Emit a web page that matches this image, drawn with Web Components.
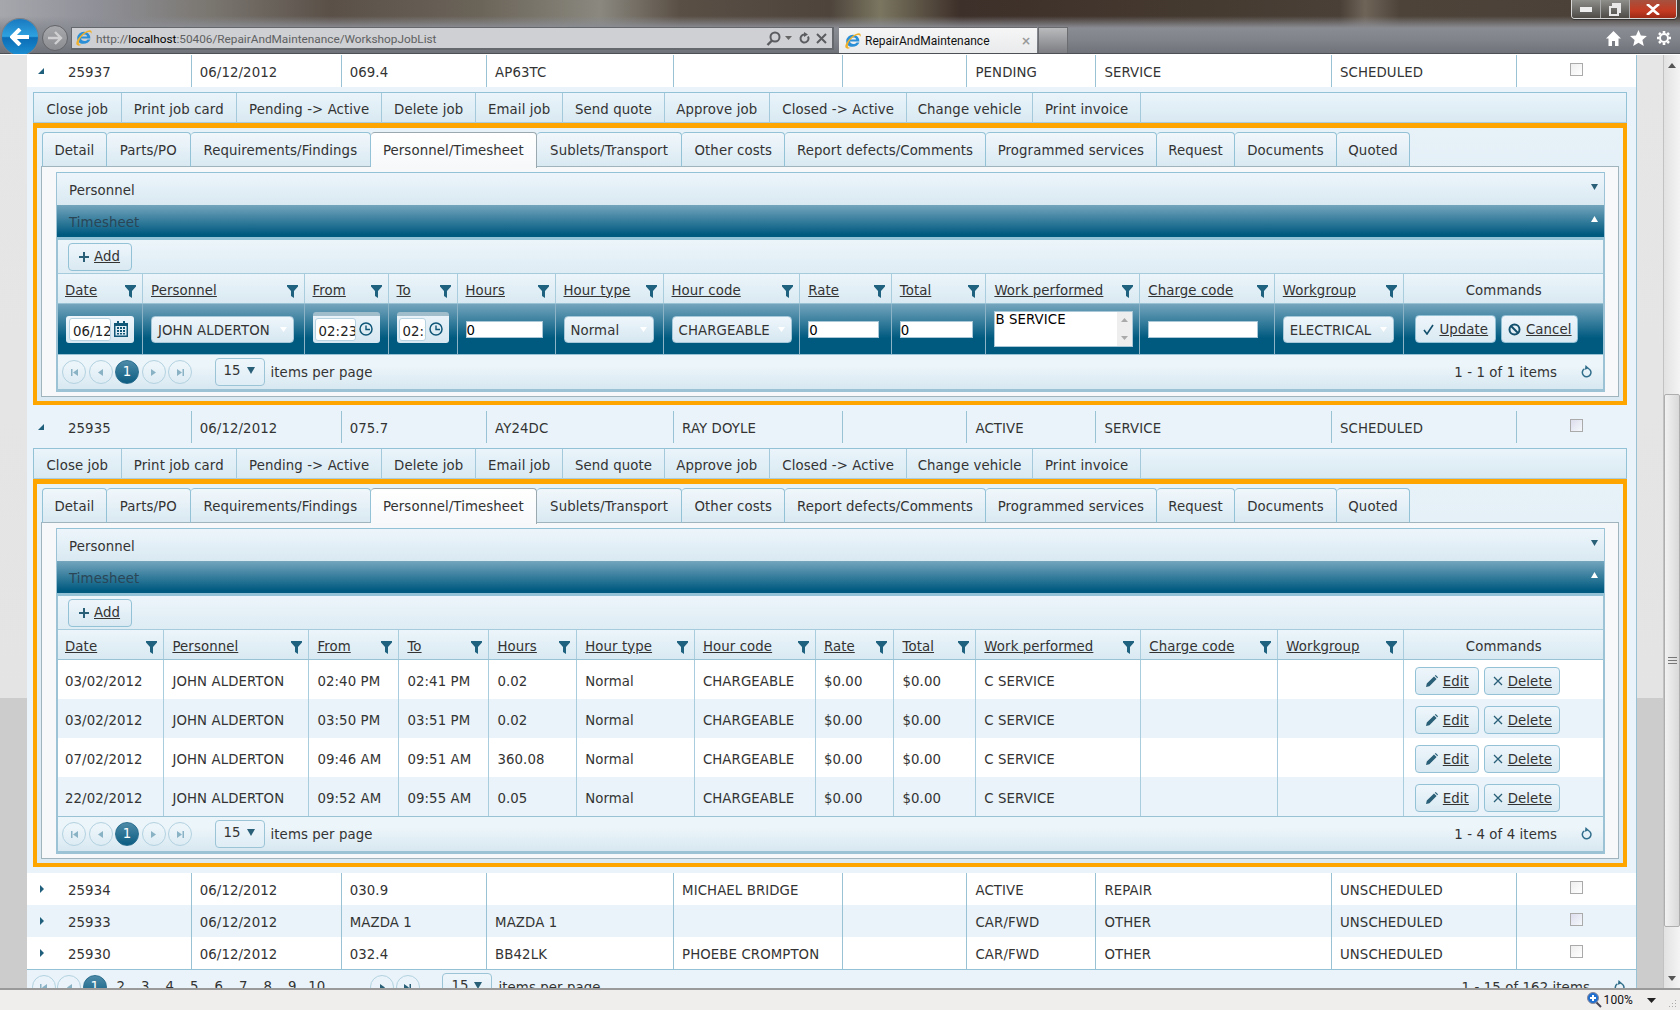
<!DOCTYPE html>
<html lang="en"><head><meta charset="utf-8"><title>RepairAndMaintenance</title>
<style>
html,body{margin:0;height:1010px;overflow:hidden;background:#fff}
body{display:flex;flex-direction:column;font:13.3px/16px "DejaVu Sans",sans-serif;letter-spacing:.1px;color:#333}
</style></head><body>
<ie-chrome></ie-chrome>
<ie-viewport>
  <job-row open><span>25937</span><span>06/12/2012</span><span>069.4</span><span>AP63TC</span><span></span><span></span><span>PENDING</span><span>SERVICE</span><span>SCHEDULED</span></job-row>
  <job-detail mode="edit"></job-detail>
  <job-row open alt><span>25935</span><span>06/12/2012</span><span>075.7</span><span>AY24DC</span><span>RAY DOYLE</span><span></span><span>ACTIVE</span><span>SERVICE</span><span>SCHEDULED</span></job-row>
  <job-detail mode="view"></job-detail>
  <job-row><span>25934</span><span>06/12/2012</span><span>030.9</span><span></span><span>MICHAEL BRIDGE</span><span></span><span>ACTIVE</span><span>REPAIR</span><span>UNSCHEDULED</span></job-row>
  <job-row alt><span>25933</span><span>06/12/2012</span><span>MAZDA 1</span><span>MAZDA 1</span><span></span><span></span><span>CAR/FWD</span><span>OTHER</span><span>UNSCHEDULED</span></job-row>
  <job-row><span>25930</span><span>06/12/2012</span><span>032.4</span><span>BB42LK</span><span>PHOEBE CROMPTON</span><span></span><span>CAR/FWD</span><span>OTHER</span><span>UNSCHEDULED</span></job-row>
  <grid-pager main info="1 - 15 of 162 items"></grid-pager>
</ie-viewport>
<ie-status></ie-status>
<script>
const IE=`<svg width="18" height="18" viewBox="0 0 18 18" style="flex:none"><path d="M2.2 9a6.6 6.6 0 0 1 13.2.6H6c.2 2.6 4.6 3.6 6.6 1h2.8c-1.800 5-10 5.800-12.600 1.400A6.500 6.500 0 0 1 2.200 9zM6.200 7.400h6c-.4-2.600-5.400-2.600-6 0z" fill="#2a8fd6"/><path d="M1.500 15.500C.3 13 5 5 12 2c3-1.200 5.500-1 4.500 3-.5-2-2-2.500-4.500-1.500C7 5.500 3 12 4 15c.5.800 1.500 1 3 .5-2 1.500-4.500 1.500-5.500 0z" fill="#efb02c"/></svg>`;
const I={
 funnel:`<svg width="11" height="14" viewBox="0 0 11 14" style="flex:none"><path d="M0 1h11v1.500L7 7v7L4 12V7L0 2.500z" fill="#1f627f"/></svg>`,
 plus:`<svg width="10" height="10" viewBox="0 0 10 10"><path d="M4 0h2v4h4v2H6v4H4V6H0V4h4z" fill="#2a5f78"/></svg>`,
 pencil:`<svg width="12" height="12" viewBox="0 0 12 12" style="flex:none"><path d="M0 12l.8-3.400L8 1.400 10.600 4 3.400 11.200zM8.800.7l.9-.7 2.300 2.300-.7.900z" fill="#2a5f78"/></svg>`,
 x:`<svg width="10" height="10" viewBox="0 0 10 10" style="flex:none"><path d="M1 1l8 8M9 1L1 9" stroke="#2a5f78" stroke-width="1.300" fill="none"/></svg>`,
 check:`<svg width="11" height="11" viewBox="0 0 11 11" style="flex:none"><path d="M1 6l3 4 6-9" stroke="#124f6c" stroke-width="1.600" fill="none"/></svg>`,
 cancel:`<svg width="13" height="13" viewBox="0 0 13 13" style="flex:none"><circle cx="6.500" cy="6.500" r="5" stroke="#124f6c" stroke-width="2" fill="none"/><path d="M3 3l7 7" stroke="#124f6c" stroke-width="2"/></svg>`,
 cal:`<svg width="14" height="16" viewBox="0 0 14 16" style="flex:none"><path d="M3 0h2v2h4V0h2v2h3v14H0V2h3zM1.500 5v9.500h11V5z" fill="#0f5677"/><path d="M3 6h2v2H3zM6 6h2v2H6zM9 6h2v2H9zM3 9h2v2H3zM6 9h2v2H6zM9 9h2v2H9zM3 12h2v1.500H3zM6 12h2v1.500H6zM9 12h2v1.500H9z" fill="#0f5677"/></svg>`,
 clock:`<svg width="14" height="14" viewBox="0 0 14 14" style="flex:none"><circle cx="7" cy="7" r="6" stroke="#0f5677" stroke-width="1.500" fill="none"/><path d="M7 3.500V7.500H11" stroke="#0f5677" stroke-width="1.400" fill="none"/></svg>`,
 refresh:`<svg width="11" height="14" viewBox="0 0 11 14"><path d="M7 3.400A4.300 4.300 0 1 1 3.400 3.800" stroke="#2f6d8a" stroke-width="1.500" fill="none"/><path d="M4.500 0l3.600 3.300-4.200 1.500z" fill="#2f6d8a"/></svg>`
};
const mk=(cls,css,html)=>customElements.define(cls,class extends HTMLElement{
  constructor(){super();const r=this.attachShadow({mode:'open'});r.innerHTML=`<style>${css}</style>`+(typeof html==='function'?html(this):html);}
});

mk('ie-chrome',`
 :host{display:block;flex:none;height:55px;box-sizing:border-box;overflow:hidden;border-bottom:1px solid #fff;
  font:12px/16px Roboto,sans-serif;letter-spacing:0;
  background:linear-gradient(180deg,rgba(130,132,140,0) 0,rgba(130,132,140,0) 16px,#8a8c93 28px,#80838a 40px,#6f7279 53px),
   linear-gradient(90deg,#a5a7ad 0,#8f9097 100px,#7a7670 210px,#5a5048 330px,#6b6459 480px,#8a887f 600px,#5a4f45 680px,#4e443c 830px,#7a7660 880px,#3d2f29 960px,#453a30 1200px,#4a4037 1340px,#6e6458 1365px,#4d4339 1400px,#4a4038 1680px)}
 .bar{height:54px;box-sizing:border-box;border-bottom:1px solid #4d5055;display:flex;flex-direction:column}
 .top{height:27px;flex:none;display:flex;justify-content:flex-end;padding-right:3px}
 .win{display:flex;align-items:stretch;height:18px;border:1px solid #d8d8d8;border-top:0;border-radius:0 0 4px 4px;overflow:hidden;box-shadow:0 1px 1px #333}
 .win b{display:flex;align-items:center;justify-content:center;background:linear-gradient(#8e8e8a,#4e4b47);width:28px;border-right:1px solid #aaa}
 .win b:last-child{width:46px;border:0;background:linear-gradient(#a5523f,#c43a22 60%,#9c2a18)}
 .row{flex:1;min-height:0;display:flex;align-items:stretch}
 .back{flex:none;width:36px;height:36px;margin:-8px 4px 0 2px;border-radius:50%;background:linear-gradient(#1a79c0,#2ea2e0 48%,#0b6db5 52%,#1c8ed2);box-shadow:0 0 0 1px #7b7e84;display:flex;align-items:center;justify-content:center}
 .fwd{flex:none;width:26px;height:26px;margin:-2px 3px 0 0;border-radius:50%;background:linear-gradient(#a8a9ac,#8b8c90);border:1px solid #63656a;box-sizing:border-box;display:flex;align-items:center;justify-content:center}
 .addr{flex:none;width:763px;height:23px;box-sizing:border-box;border:1px solid #65686d;border-width:1px 2px 2px 1px;background:#cfd0d3;display:flex;align-items:center;padding:0 5px 0 3px;color:#5e6062;gap:3px;white-space:nowrap;font-size:11.800px}
 .addr span:first-of-type{padding-top:2px}
 .addr em{font-style:normal;color:#000}
 .addr .sp{flex:1}
 .addr svg{flex:none}
 .tab{flex:none;width:198px;margin-left:5px;box-sizing:border-box;background:linear-gradient(#f6f6f7,#e9eaeb);border-top:1px solid #6a6c70;display:flex;align-items:center;padding:0 6px 0 5px;gap:3px;color:#111;white-space:nowrap}
 .tab .sp{flex:1}.tab i{font:700 12px "DejaVu Sans";color:#999}
 .new{flex:none;width:28px;margin-left:1px;border:1px solid #6a6c70;border-bottom:0;background:linear-gradient(#b9babc,#7c7e83)}
 .tools{margin-left:auto;display:flex;gap:9px;padding:0 8px 4px 0;align-items:center}
`,`<div class="bar"><div class="top"><div class="win">
 <b><svg width="12" height="5"><rect width="12" height="5" fill="#eee"/></svg></b>
 <b><svg width="12" height="13"><path d="M3 0h9v10h-2v3H0V3h3zM2 5v6h6V5z" fill="#e8e8e8" fill-rule="evenodd"/></svg></b>
 <b><svg width="14" height="11"><path d="M1 0l6 5 6-5M1 11l6-5 6 5" stroke="#fff" stroke-width="2.600" fill="none"/></svg></b>
</div></div><div class="row">
 <div class="back"><svg width="20" height="18" viewBox="0 0 20 18"><path d="M10 1L2 9l8 8M3 9h16" stroke="#fff" stroke-width="4" fill="none"/></svg></div>
 <div class="fwd"><svg width="16" height="14" viewBox="0 0 16 14"><path d="M8 1l6 6-6 6M13 7H1" stroke="#cfcfd1" stroke-width="2.400" fill="none"/></svg></div>
 <div class="addr">${IE}<span>http://<em>localhost</em>:50406/RepairAndMaintenance/WorkshopJobList</span><span class="sp"></span>
  <svg width="15" height="15" viewBox="0 0 15 15"><circle cx="9" cy="6" r="4.500" stroke="#5a5c5f" stroke-width="2" fill="none"/><path d="M6 9.500L1.500 14" stroke="#5a5c5f" stroke-width="2.400"/></svg>
  <svg width="7" height="4" style="margin:0 4px 0 1px"><path d="M0 0h7L3.500 4z" fill="#666"/></svg>
  <svg width="12" height="13" viewBox="0 0 12 13"><path d="M9 4.500a4 4 0 1 1-4-2" stroke="#5a5c5f" stroke-width="2" fill="none"/><path d="M5 0l4 2.500L5 5z" fill="#5a5c5f"/></svg>
  <svg width="11" height="11" style="margin-left:2px" viewBox="0 0 11 11"><path d="M1 1l9 9M10 1l-9 9" stroke="#5a5c5f" stroke-width="2"/></svg>
 </div>
 <div class="tab">${IE}<span>RepairAndMaintenance</span><span class="sp"></span><i>×</i></div>
 <div class="new"></div>
 <div class="tools">
  <svg width="15" height="15" viewBox="0 0 15 15"><path d="M7.500 0L15 7.500h-2.500V15H9v-5H6v5H2.500V7.500H0z" fill="#fff"/></svg>
  <svg width="17" height="16" viewBox="0 0 17 16"><path d="M8.500 0l2.400 5.500 6 .5-4.500 4 1.400 6-5.300-3.200L3.200 16l1.400-6L0 6l6-.5z" fill="#fff"/></svg>
  <svg width="16" height="16" viewBox="0 0 16 16"><path d="M8 1v2.200M8 12.800V15M1 8h2.200M12.800 8H15M3 3l1.600 1.600M11.400 11.400L13 13M13 3l-1.600 1.600M4.600 11.400L3 13" stroke="#fff" stroke-width="2.600"/><circle cx="8" cy="8" r="4" stroke="#fff" stroke-width="2" fill="none"/></svg>
 </div>
</div></div>`);

mk('ie-viewport',`
 :host{display:flex;flex:none;height:933px;overflow:hidden}
 .gut{flex:none;background:linear-gradient(#e6e6e6 0,#e4e4e4 643px,#cccccc 643px)}
 .l{width:27px}.r{border-left:1px solid #9ac2d5;box-sizing:border-box;width:27px}
 .main{flex:none;width:1609px;overflow:hidden;display:flex;flex-direction:column;background:#e9f3f9}
 ::slotted(*){flex:none}
 .sb{flex:none;width:17px;background:linear-gradient(90deg,#e2e2e2,#f4f4f4);display:flex;flex-direction:column;align-items:stretch;border-left:1px solid #c2c2c2;box-sizing:border-box}
 .arr{height:20px;flex:none;display:flex;align-items:center;justify-content:center}
 .th{height:533px;margin-top:319px;background:linear-gradient(90deg,#f2f2f2,#d9d9d9);border:1px solid #aeaeae;border-radius:2px;display:flex;align-items:center;justify-content:center;box-sizing:border-box}
 .sp{flex:1}
`,`<div class="gut l"></div><div class="main"><slot></slot></div><div class="gut r"></div>
<div class="sb"><div class="arr"><svg width="8" height="5"><path d="M4 0l4 5H0z" fill="#555"/></svg></div>
<div class="th"><svg width="9" height="8"><path d="M0 0h9v1H0zM0 3h9v1H0zM0 6h9v1H0z" fill="#777"/></svg></div>
<div class="sp"></div><div class="arr"><svg width="8" height="5"><path d="M0 0h8L4 5z" fill="#555"/></svg></div></div>`);

mk('ie-status',`
 :host{display:flex;flex:none;height:22px;box-sizing:border-box;border-top:2px solid #9a9a9a;background:#f0eded;align-items:center;justify-content:flex-end;font:12px/14px Roboto,sans-serif;color:#111;gap:2px;padding-right:3px}
 .g{margin-left:9px;width:10px;height:10px;align-self:flex-end;margin-bottom:1px}
`,`<svg width="15" height="16" viewBox="0 0 15 16"><path d="M9 10l5 5" stroke="#445" stroke-width="2"/><circle cx="6" cy="6" r="5.500" fill="#1f6fd0" stroke="#889"/><path d="M3 5h2V3h2v2h2v2H7v2H5V7H3z" fill="#fff"/></svg>
<span>100%</span><svg width="9" height="5" style="margin-left:12px"><path d="M0 0h9L4.500 5z" fill="#222"/></svg>
<svg class="g" viewBox="0 0 10 10"><path d="M8 1h1v1H8zM5 4h1v1H5zM8 4h1v1H8zM2 7h1v1H2zM5 7h1v1H5zM8 7h1v1H8z" fill="#aaa"/></svg>`);

mk('job-row',`
 :host{display:grid;grid-template-columns:33px 130.700px 150px 145.400px 187px 168.600px 124.800px 129px 235.500px 185.500px 120px;height:32px;background:#fff;align-items:stretch}
 :host([alt]){background:#e9f3f9}
 ::slotted(span){border-left:1px solid #9ac2d5;padding:3px 0 0 8px;display:flex;align-items:center;white-space:nowrap;overflow:hidden}
 ::slotted(span:first-child){border-left:0}
 .a{display:flex;align-items:center;justify-content:flex-end;padding-right:16px}
 .c{border-left:1px solid #9ac2d5;display:flex;align-items:flex-start;justify-content:center;padding-top:8px}
 .c i{display:block;width:11px;height:11px;border:1px solid #aaa;background:linear-gradient(135deg,#eee,#fff)}
 :host([alt]) .c i{background:linear-gradient(135deg,#dde,#f4f8fb)}
`,h=>`<div class="a">${h.hasAttribute('open')
 ?`<svg width="6" height="6"><path d="M6 0v6H0z" fill="#1f5f7c"/></svg>`
 :`<svg width="4" height="8"><path d="M0 0l4 4-4 4z" fill="#1f5f7c"/></svg>`}</div><slot></slot><div class="c"><i></i></div>`);

const ACT=[['Close job',87.6],['Print job card',115.4],['Pending -> Active',145.4],['Delete job',93.6],['Email job',87.5],['Send quote',101.1],['Approve job',105.4],['Closed -> Active',137.4],['Change vehicle',125.6],['Print invoice',108.5]];
mk('action-bar',`
 :host{display:flex;height:31px;box-sizing:border-box;border:1px solid #93c1d6;border-bottom-color:#a9cddd;background:linear-gradient(#eaf4fa,#d9e9f2)}
 span{display:flex;align-items:center;justify-content:center;box-sizing:border-box;flex:none;padding-top:5px;border-right:1px solid #a3c9da;white-space:nowrap}
 span:first-child{margin-left:-1px}
`,ACT.map(([t,w])=>`<span style="width:${w}px">${t.replace('>','&gt;')}</span>`).join(''));

const TABS=[['Detail',64.8],['Parts/PO',84],['Requirements/Findings',180],['Personnel/Timesheet',166],['Sublets/Transport',145.5],['Other costs',103],['Report defects/Comments',200.6],['Programmed services',170.9],['Request',78.5],['Documents',101.5],['Quoted',73.5]];
mk('tab-strip',`
 :host{display:flex;height:35px;align-items:stretch}
 b{font-weight:400;flex:none;width:1px;border-bottom:1px solid #a0b4bd}
 span{display:flex;align-items:center;justify-content:center;flex:none;padding-top:2px;box-sizing:border-box;border:1px solid #93c1d6;border-left-width:0;border-radius:4px 4px 0 0;background:linear-gradient(#f1f7fb,#d9e9f2);white-space:nowrap;border-bottom-color:#a0b4bd}
 b+span{border-left-width:1px}
 span.on{background:linear-gradient(#fff,#f6f8fa);border-color:#9aa8af;border-bottom:0;margin-bottom:-1px;height:36px;padding-bottom:1px}
 i{flex:1;border-bottom:1px solid #a0b4bd}
`,'<b></b>'+TABS.map(([t,w],i)=>`<span style="width:${w}px"${i==3?' class="on"':''}>${t}</span>`).join('')+'<i></i>');

mk('panel-bars',`
 :host{display:block;border-bottom:3px solid #9bc2d5;border-left:2px solid #9bc2d5;border-right:2px solid #9bc2d5;background:#e9f3f9}
 .h{display:flex;align-items:center;justify-content:space-between;padding:0 6px 0 12px;box-sizing:border-box}
 .h span{padding-top:3px}
 .p{height:33px;background:linear-gradient(#edf5fb,#d9e9f2);border-top:1px solid #93c1d6;margin:0 -1px}
 .t{background:linear-gradient(#74a5bd,#005a80 92%);color:#2a4656;margin:0 -1px;border-bottom:3px solid #93c1d6;height:35px}
 .t span{padding-top:4px}
 .h svg{margin-top:-4px}
 .add{height:33px;box-sizing:border-box;display:flex;align-items:center;padding-left:10px;background:linear-gradient(#ecf5fa,#deecf4)}
 .add span{display:flex;align-items:center;gap:5px;height:28px;width:64px;box-sizing:border-box;padding-left:10px;border:1px solid #93c1d6;border-radius:4px;background:linear-gradient(#eef6fb,#d9e9f2)}
 .add u{text-decoration:underline;padding-top:1px}
`,`<div class="h p"><span>Personnel</span><svg width="7" height="6"><path d="M0 0h7L3.500 6z" fill="#2a5f78"/></svg></div>
<div class="h t"><span>Timesheet</span><svg width="7" height="6"><path d="M3.500 0L7 6H0z" fill="#fff"/></svg></div>
<div class="add"><span>${I.plus}<u>Add</u></span></div><slot></slot>`);

mk('job-detail',`
 :host{display:block;padding:5px 9px 6px 6px;background:#e9f3f9}
 .box{border:4px solid #ffa500;border-top-width:5px;padding:4px 4px 4px 4px;background:linear-gradient(#e6f1f8,#dbe9f2);}
 .content{border:1px solid #a0b4bd;border-top:0;padding:5px 13px 4px 14px;background:#f6f8fa}
`,h=>`<action-bar></action-bar><div class="box"><tab-strip></tab-strip><div class="content"><panel-bars><time-grid mode="${h.getAttribute('mode')}"></time-grid></panel-bars></div></div>`);

const COLS={edit:[84,161.500,84,69,98,108,136.700,91.600,94.600,153.900,134.500,129.500,200],
            view:[105.400,145,90,90,87.800,117.700,121,78.600,81.900,165,137,126,200]};
const HEAD=['Date','Personnel','From','To','Hours','Hour type','Hour code','Rate','Total','Work performed','Charge code','Workgroup'];
mk('time-grid',`
 :host{display:block}
 .r{display:grid;align-items:stretch}
 .head{background:linear-gradient(#ecf5fa,#d9e9f2);border-top:1px solid #a6cbdc;border-bottom:1px solid #9ac2d5;box-sizing:border-box;height:31px}
 .head>div{display:flex;align-items:center;justify-content:space-between;padding:4px 6px 0 8px;border-left:1px solid #a9cddd;white-space:nowrap;overflow:hidden}
 .head>div:first-child{border-left:0;padding-left:7px}
 .head u{text-decoration:underline}
 .head>div.cm{justify-content:center;padding:4px 0 0}
 .row{height:39px;background:#fff}.row.alt{background:#e9f3f9}.row.last{height:40px;border-bottom:1px solid #9ac2d5;box-sizing:border-box}
 .row>div{display:flex;align-items:center;padding:4px 0 0 8px;border-left:1px solid #a9cddd;white-space:nowrap;overflow:hidden}
 .row>div:first-child{border-left:0;padding-left:7px}
 .row>div.btns,.edit>div.btns{gap:5px;padding:2px 0 0 11px}
 .btn{display:flex;align-items:center;justify-content:center;gap:5px;height:28px;box-sizing:border-box;border:1px solid #93c1d6;border-radius:4px;background:linear-gradient(#eef6fb,#d9e9f2);color:#333}
 .btn u{text-decoration:underline;padding-top:2px}
 .edit{height:51px;background:linear-gradient(#74a5bd 0,#005a80 68%,#005a80);border-bottom:1px solid #9ac2d5;box-sizing:border-box}
 .edit>div{display:flex;align-items:center;padding-left:8px;border-left:1px solid #8db3c6;overflow:hidden}
 .edit>div:first-child{border-left:0}
 .combo{height:27px;box-sizing:border-box;border:1px solid #a6c8d8;border-radius:4px;background:linear-gradient(#eef6fb,#d6e7f1);display:flex;align-items:center;justify-content:space-between;padding:0 6px;white-space:nowrap;overflow:hidden;flex:none}
 .combo span{padding-top:4px}
 .dt{height:27px;box-sizing:border-box;border-radius:3px;background:linear-gradient(#eef6fb,#d6e7f1);display:flex;align-items:center;padding:0 3px;gap:3px;flex:none}
 .tm{height:31px;align-self:center;background:linear-gradient(#a0bdcc 0,#a0bdcc 4px,#e8f2f8 4px,#d6e7f1);padding:4px 2px 0;margin-top:-4px}
 .dt b{font-weight:400;flex:none;display:block;height:23px;line-height:25px;box-sizing:border-box;background:#fff;border:1px solid #b7d3e1;border-radius:3px;padding-left:3px;overflow:hidden;white-space:nowrap;color:#222}
 .inp{height:17px;flex:none;box-sizing:border-box;background:#fff;border:1px solid #a9c7d6;line-height:17px;color:#000;overflow:hidden}
 .ta{height:36px;width:139px;box-sizing:border-box;background:#fff;border:1px solid #a9c7d6;color:#000;display:flex;justify-content:space-between;line-height:16px;flex:none}
 .ta i{width:15px;background:#eee;display:flex;flex-direction:column;justify-content:space-between;align-items:center;padding:6px 0;box-sizing:border-box}
`,h=>{
 const m=h.getAttribute('mode'),c=COLS[m],tpl=`grid-template-columns:${c.map(x=>x+'px').join(' ')}`;
 const head=`<div class="r head" style="${tpl}">${HEAD.map(t=>`<div><u>${t}</u>${I.funnel}</div>`).join('')}<div class="cm">Commands</div></div>`;
 const tri=`<svg width="7" height="5" style="flex:none"><path d="M0 0h7L3.500 5z" fill="#fff"/></svg>`;
 const combo=(t,w)=>`<div class="combo" style="width:${w}px"><span>${t}</span>${tri}</div>`;
 const inp=(t,w)=>`<div class="inp" style="width:${w}px">${t}</div>`;
 if(m==='edit'){
  return `${head}<div class="r edit" style="${tpl}">
  <div><div class="dt" style="width:68px"><b style="width:42px">06/12/2012</b>${I.cal}</div></div>
  <div>${combo('JOHN ALDERTON',143)}</div>
  <div><div class="dt tm" style="width:67px;box-sizing:border-box"><b style="width:41px">02:23 PM</b>${I.clock}</div></div>
  <div><div class="dt tm" style="width:52px;box-sizing:border-box"><b style="width:27px">02:23 PM</b>${I.clock}</div></div>
  <div>${inp('0',77)}</div><div>${combo('Normal',90)}</div><div>${combo('CHARGEABLE',120)}</div>
  <div>${inp('0',71)}</div><div>${inp('0',73)}</div>
  <div><div class="ta"><span>B SERVICE</span><i><svg width="7" height="4"><path d="M3.500 0L7 4H0z" fill="#aaa"/></svg><svg width="7" height="4"><path d="M0 0h7L3.500 4z" fill="#aaa"/></svg></i></div></div>
  <div>${inp('',110)}</div><div>${combo('ELECTRICAL',111)}</div>
  <div class="btns" style="padding-top:0"><span class="btn" style="width:81px">${I.check}<u>Update</u></span><span class="btn" style="width:77px">${I.cancel}<u>Cancel</u></span></div>
  </div><grid-pager info="1 - 1 of 1 items"></grid-pager>`;
 }
 const d=['03/02/2012|02:40 PM|02:41 PM|0.02','03/02/2012|03:50 PM|03:51 PM|0.02','07/02/2012|09:46 AM|09:51 AM|360.08','22/02/2012|09:52 AM|09:55 AM|0.05'];
 return head+d.map((s,i)=>{const[a,b,e,hr]=s.split('|');
  return `<div class="r row${i%2?' alt':''}${i==3?' last':''}" style="${tpl}">${[a,'JOHN ALDERTON',b,e,hr,'Normal','CHARGEABLE','$0.00','$0.00','C SERVICE','',''].map(t=>`<div>${t}</div>`).join('')}
  <div class="btns"><span class="btn" style="width:64px">${I.pencil}<u>Edit</u></span><span class="btn" style="width:76px">${I.x}<u>Delete</u></span></div></div>`}).join('')
  +`<grid-pager info="1 - 4 of 4 items"></grid-pager>`;
});

mk('grid-pager',`
 :host{display:flex;align-items:center;height:34px;padding-left:4px;padding-right:11px;background:linear-gradient(#ecf5fa 30%,#d8e8f1);white-space:nowrap}
 :host([main]){padding-left:4.500px;padding-right:11px;background:#e9f3f9;border-top:1px solid #93c1d6;height:34px;box-sizing:border-box;padding-top:1px;flex:none}
 .c{flex:none;width:24px;height:24px;box-sizing:border-box;border:1px solid #b3d2e0;border-radius:50%;margin-right:2.500px;display:flex;align-items:center;justify-content:center}
 :host([main]) .c{margin-right:1.700px}
 .on{background:linear-gradient(#4d8aa8,#0c5d82);color:#fff;border-color:#2c6f90}
 .n{flex:none;width:24.500px;text-align:center}
 .dd{flex:none;width:50px;height:28px;box-sizing:border-box;border:1px solid #9cc4d7;border-radius:4px;margin:0 6px 0 20px;display:flex;align-items:center;justify-content:space-between;padding:0 9px 3px 8px;background:linear-gradient(#eef6fb,#dfedf5)}
 .t{padding-top:2px}
 .sp{flex:1}
 .r{margin-left:24px;display:flex}
 :host([main]) .dd{margin-left:21px}
`,h=>{
 const ic=(d,f='#8ab2c5')=>`<svg width="9" height="9"><path d="${d}" fill="${f}"/></svg>`;
 const first=ic('M1 1h1.500v7H1zM8 1v7L3 4.500z'),prev=ic('M7 1v7L2 4.500z'),next=ic('M2 1v7l5-3.500z'),last=ic('M1 1v7l5-3.500zM6.500 1H8v7H6.500z');
 const main=h.hasAttribute('main');
 const nums=main?[2,3,4,5,6,7,8,9,10].map(n=>`<span class="n">${n}</span>`).join('')+'<span style="width:41px;flex:none"></span>':'';
 return `<span class="c">${first}</span><span class="c">${prev}</span><span class="c on">1</span>${nums}<span class="c">${main?ic('M2 1v7l5-3.500z','#2a5f78'):next}</span><span class="c">${main?ic('M1 1v7l5-3.500zM6.500 1H8v7H6.500z','#2a5f78'):last}</span>
 <span class="dd"><span>15</span><svg width="8" height="7"><path d="M0 0h8L4 7z" fill="#2a5f78"/></svg></span><span class="t">items per page</span><span class="sp"></span><span class="t">${h.getAttribute('info')}</span><span class="r">${I.refresh}</span>`;
});
</script>
</body></html>
